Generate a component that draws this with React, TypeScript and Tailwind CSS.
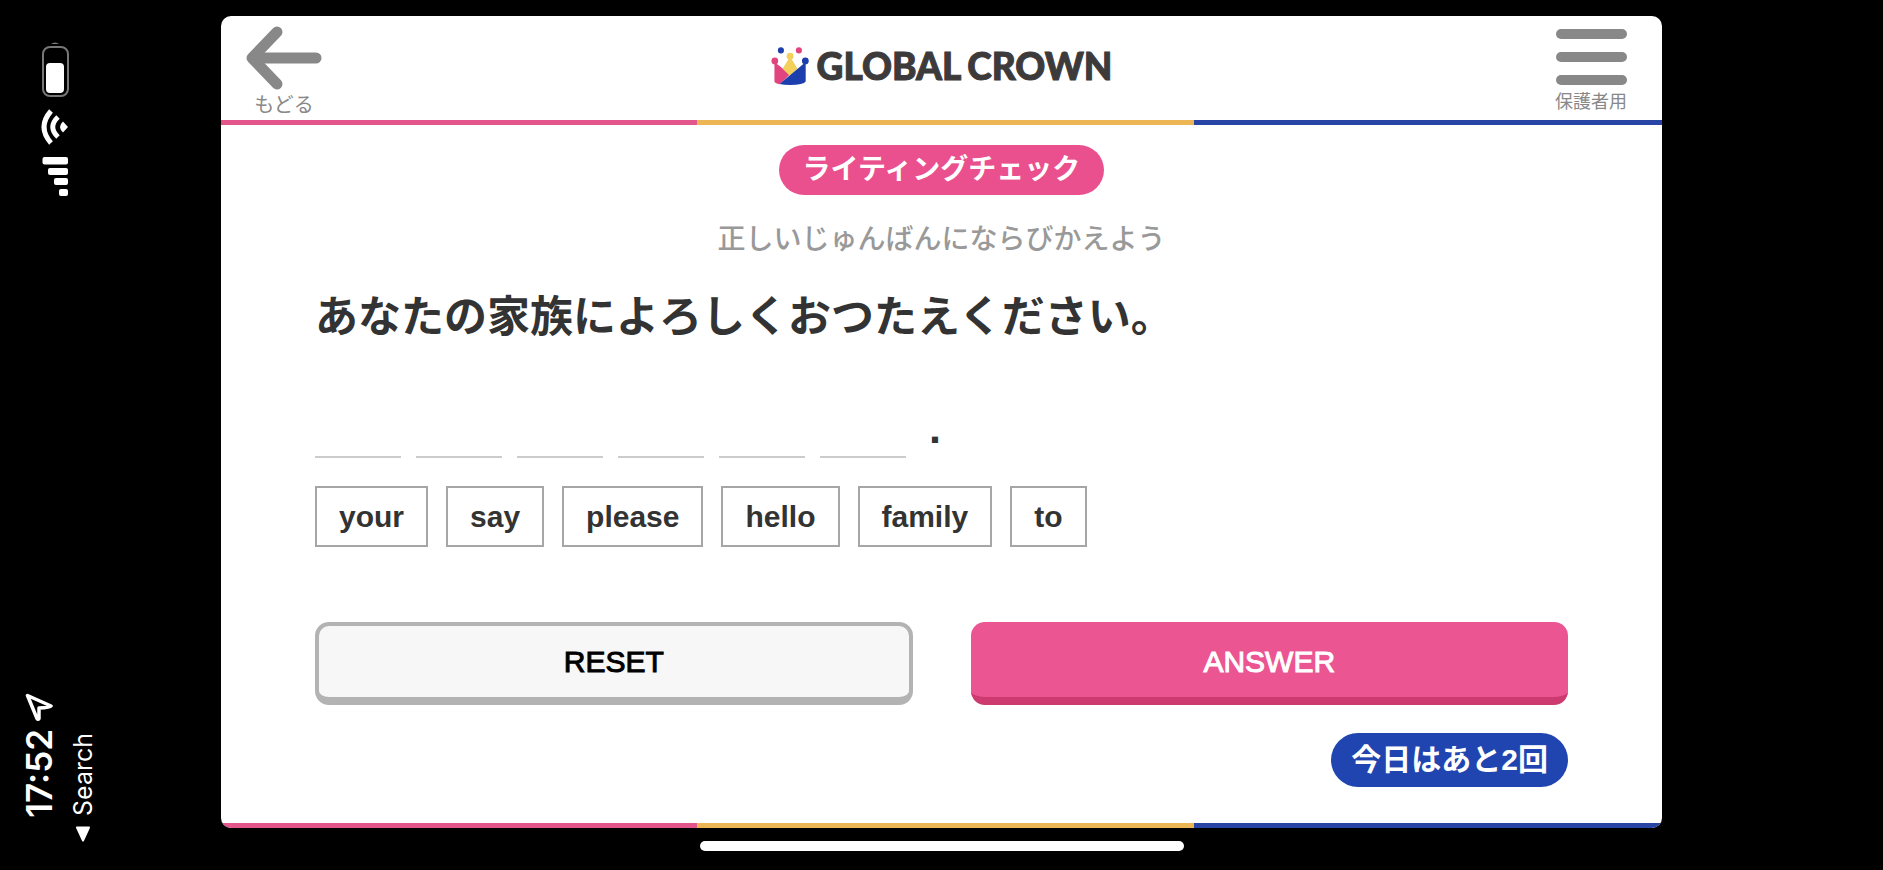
import { useState } from 'react';

const words = ['your', 'say', 'please', 'hello', 'family', 'to'];

//上下の3色ライン
function Stripe() {
  return (
    <div className="flex h-[5px] w-full shrink-0">
      <div className="w-[33%] bg-[#e2568c]" />
      <div className="flex-1 bg-[#ecb654]" />
      <div className="w-[32.5%] bg-[#2845a5]" />
    </div>
  );
}

//横向きのステータスバー
function StatusBar() {
  return (
    <aside className="flex w-[221px] shrink-0 flex-col justify-between pb-7 pt-[41px] text-white">
      <div className="flex flex-col gap-3 pl-[41px]">
        <svg width="28" height="56" viewBox="0 0 28 56" aria-label="バッテリー">
          <path d="M10 3a5 4 0 0 1 8 0z" fill="#777" />
          <rect x="2" y="6" width="25" height="49" rx="7" fill="none" stroke="#777" strokeWidth="2" />
          <rect x="5" y="22" width="18" height="30" rx="4" fill="#fff" />
        </svg>
        <svg width="28" height="36" viewBox="0 0 28 36" aria-label="Wi-Fi">
          <path d="M27 18L22 12.500Q16 18 22 23.500Z" fill="#fff" />
          <path d="M17 8Q6.500 18 17 28" fill="none" stroke="#fff" strokeWidth="5" />
          <path d="M10 2Q-4 18 10 34" fill="none" stroke="#fff" strokeWidth="5" />
        </svg>
        <svg width="28" height="39" viewBox="0 0 28 39" fill="#fff" aria-label="電波">
          <rect x="1.500" y="0" width="25.500" height="7.500" rx="2" />
          <rect x="7" y="11" width="20" height="7" rx="2" />
          <rect x="13" y="21" width="14" height="7" rx="2" />
          <rect x="18" y="32" width="9" height="7" rx="2" />
        </svg>
      </div>

      <div className="flex items-end gap-3 pl-[22px] font-['Inter',sans-serif]">
        <div className="flex flex-col items-center gap-2 pb-6">
          <svg width="28" height="28" viewBox="0 0 28 28" aria-label="位置情報">
            <path d="M2.500 2.500L26 13Q25 14.500 14 15L14 25.500Q13 27 12 25.500Z" fill="none" stroke="#fff" strokeWidth="3.500" strokeLinejoin="round" />
          </svg>
          <span className="rotate-180 text-[35px] font-semibold leading-[34px] [writing-mode:vertical-rl]">17:52</span>
        </div>
        <a href="#search" className="flex flex-col items-center gap-2.5">
          <span className="rotate-180 text-[25px] leading-[30px] [writing-mode:vertical-rl]">Search</span>
          <svg width="16" height="16" viewBox="0 0 16 16" aria-hidden="true">
            <path d="M2 1.500H14L8 14.500Z" fill="#fff" stroke="#fff" strokeWidth="2" strokeLinejoin="round" />
          </svg>
        </a>
      </div>
    </aside>
  );
}

function Logo() {
  return (
    <div className="flex items-center gap-2">
      <svg width="38" height="38" viewBox="95 80 110 112" aria-hidden="true">
        <path d="M104 124L150 160L120 190Q104 187 104 181Z" fill="#e0457f" />
        <path d="M150 108L172 144L149 165L128 144Z" fill="#f3cf5c" />
        <path d="M196 124V182Q190 192 150 192Q130 192 119 189Z" fill="#1d3fae" />
        <circle cx="105" cy="121" r="10" fill="#e0457f" />
        <circle cx="150" cy="107" r="10" fill="#f3cf5c" />
        <circle cx="195" cy="121" r="10" fill="#1d3fae" />
        <circle cx="123" cy="90" r="9" fill="#1d3fae" />
        <circle cx="176" cy="90" r="9" fill="#e0457f" />
      </svg>
      <p className="flex gap-1.5 font-['Lato',sans-serif] text-[37px] font-black leading-[44px] text-[#3c3a3b] [-webkit-text-stroke:1px]">
        <span>GLOBAL</span>
        <span>CROWN</span>
      </p>
    </div>
  );
}

function Header() {
  return (
    <header className="relative flex h-[104px] shrink-0 items-start justify-between pl-6 pr-[35px] pt-2.5 text-[#888]">
      <button className="flex flex-col items-center text-xl leading-[30px]">
        <svg width="78" height="64" viewBox="0 0 78 64" fill="none" stroke="#888" strokeLinecap="round" strokeLinejoin="round" aria-hidden="true">
          <path d="M32 6L7 32L32 58" strokeWidth="11" />
          <path d="M10 32H71" strokeWidth="11" />
        </svg>
        もどる
      </button>
      <div className="absolute left-1/2 top-7 -translate-x-1/2">
        <Logo />
      </div>
      <button className="flex flex-col items-center gap-[13px] pt-[3px] text-lg leading-7">
        <span className="h-2.5 w-[71px] rounded-full bg-[#888]" />
        <span className="h-2.5 w-[71px] rounded-full bg-[#888]" />
        <span className="h-2.5 w-[71px] rounded-full bg-[#888]" />
        <span className="-mt-2.5">保護者用</span>
      </button>
    </header>
  );
}

export default function App() {
  const [picked, setPicked] = useState<number[]>([]); // 選んだ単語の順番

  return (
    <div className="flex min-h-screen bg-black font-['Liberation_Sans','Noto_Sans_CJK_JP',sans-serif]">
      <StatusBar />

      <div className="flex flex-1 flex-col items-center pb-[19px] pt-4">
        <main className="flex w-full flex-1 flex-col overflow-hidden rounded-[10px] bg-white">
          <Header />
          <Stripe />

          <div className="flex flex-1 flex-col px-[94px] pb-9 pt-5 text-[#333]">
            <p className="flex h-[50px] items-center self-center rounded-full bg-[#ea508d] px-6 text-[28px] font-bold text-white">
              ライティングチェック
            </p>
            <p className="mt-6 text-center text-[28px] font-medium leading-[42px] text-[#999]">
              正しいじゅんばんにならびかえよう
            </p>
            <h1 className="mt-6 text-[43px] font-bold leading-[64px]">
              あなたの家族によろしくおつたえください。
            </h1>

            {/* 解答欄 */}
            <div className="mt-[53px] flex gap-[15px] text-3xl font-bold">
              {words.map((_, i) => (
                <div key={i} className="flex h-14 w-[86px] items-center justify-center border-b-2 border-[#ccc]">
                  {words[picked[i]]}
                </div>
              ))}
              <span className="pl-2 text-[43px] leading-[52px]">.</span>
            </div>

            <div className="mt-7 flex gap-[18px]">
              {words.map((word, i) => (
                <button
                  key={word}
                  disabled={picked.includes(i)}
                  onClick={() => setPicked([...picked, i])}
                  className="h-[61px] border-2 border-[#a6a6a6] px-[22px] text-3xl font-bold disabled:opacity-30"
                >
                  {word}
                </button>
              ))}
            </div>

            <div className="mt-[75px] grid grid-cols-2 gap-[58px] text-3xl">
              <button
                onClick={() => setPicked([])}
                className="h-[83px] rounded-[14px] border-4 border-b-8 border-[#b3b3b3] bg-[#f7f7f7] text-black [-webkit-text-stroke:1px]"
              >
                RESET
              </button>
              <button className="h-[83px] rounded-[14px] border-b-8 border-[#cc3a70] bg-[#eb5591] pt-1 text-white [-webkit-text-stroke:1px]">
                ANSWER
              </button>
            </div>

            <p className="mt-7 flex h-[54px] items-center self-end rounded-full bg-[#2045b0] px-5 text-3xl font-bold text-white">
              今日はあと2回
            </p>
          </div>

          <Stripe />
        </main>

        {/* ホームバー */}
        <div className="mt-[13px] h-2.5 w-[484px] rounded-full bg-white" />
      </div>

      <div className="w-[221px] shrink-0" />
    </div>
  );
}
